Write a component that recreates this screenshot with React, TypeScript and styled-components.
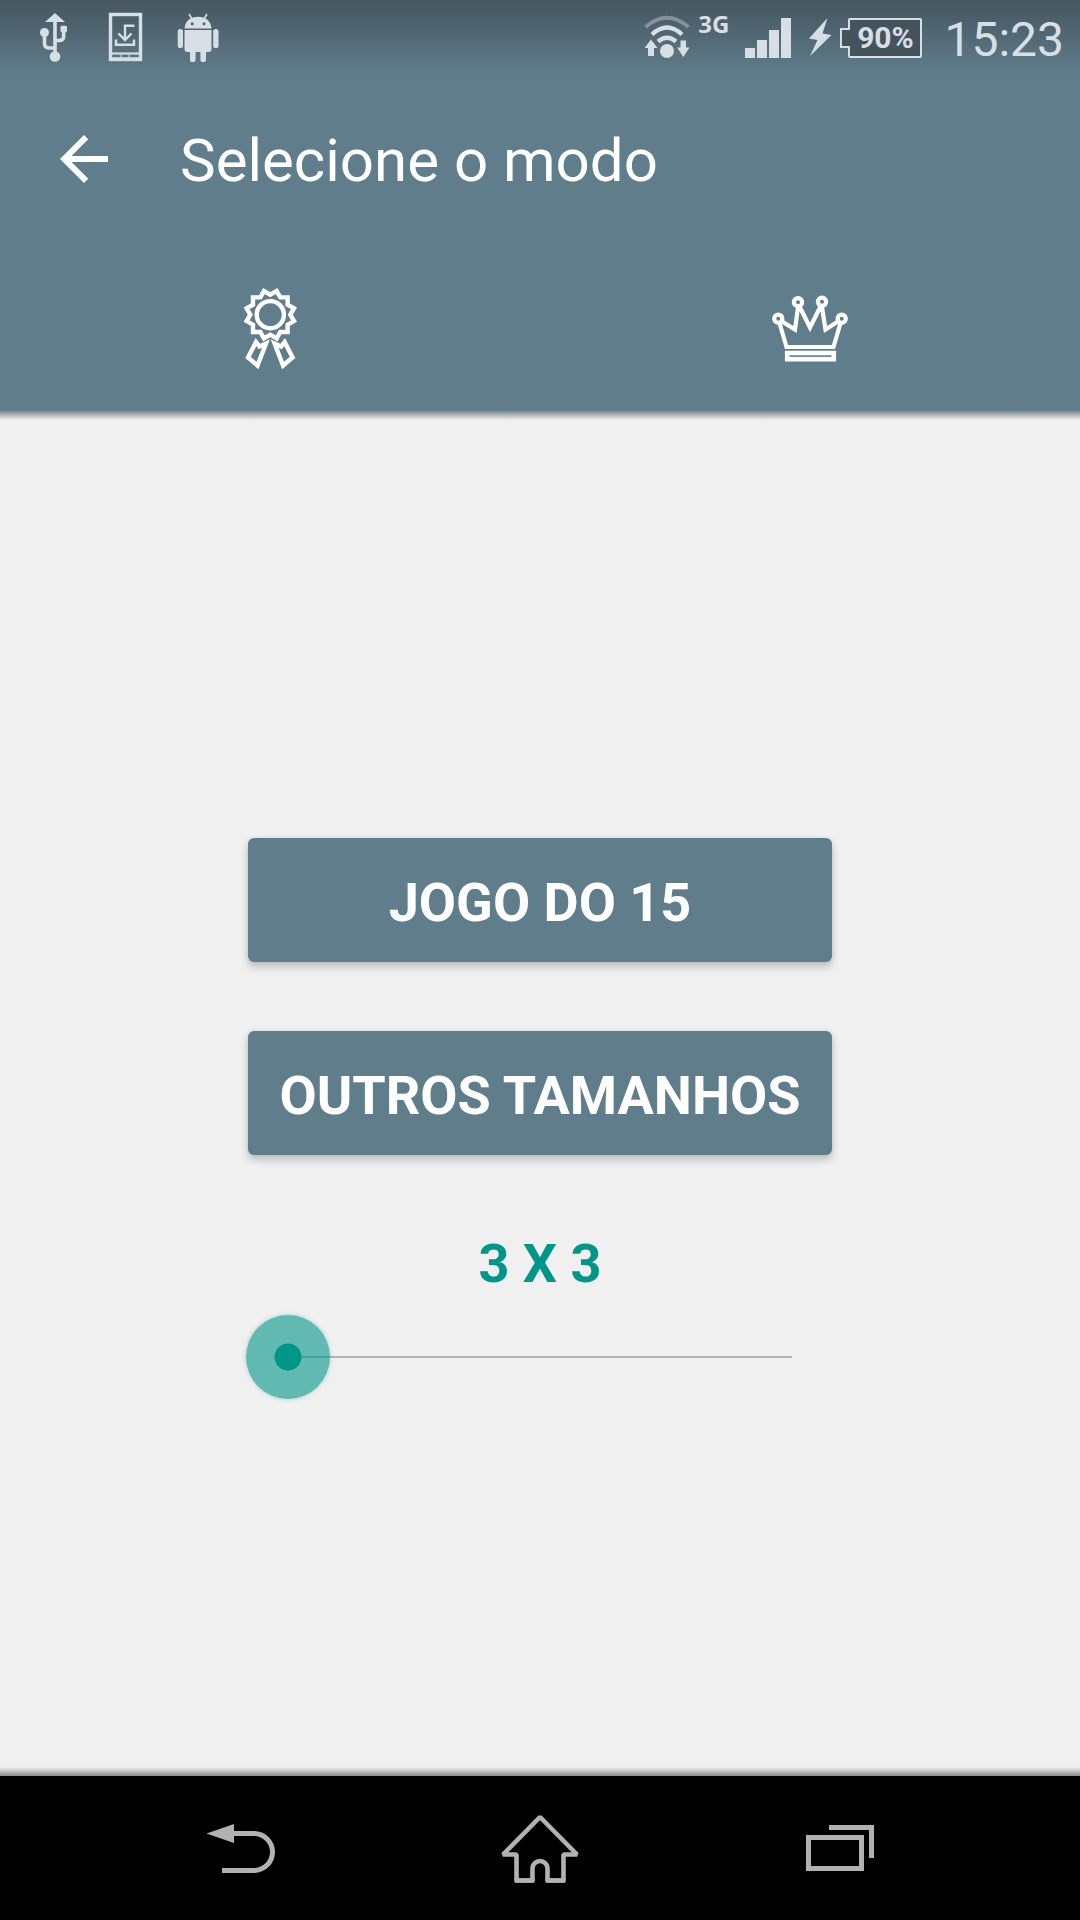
import React, { useState } from "react";
import styled, { createGlobalStyle } from "styled-components";

const slate = "#607d8b";
const teal = "#009688";
const halo = "rgba(0, 150, 136, 0.6)";
const paper = "#f0f0f0";
const statusInk = "#d7dfe4";

const GlobalStyle = createGlobalStyle`
  *, *::before, *::after { box-sizing: border-box; }
  body {
    margin: 0;
    background: ${paper};
    font-family: Roboto, "Noto Sans", sans-serif;
  }
`;

const Screen = styled.div`
  display: flex;
  flex-direction: column;
  min-height: 100vh;
`;

const Header = styled.header`
  background: ${slate};
`;

const StatusBar = styled.div`
  display: flex;
  align-items: center;
  justify-content: space-between;
  height: 75px;
  padding: 0 16px 0 18px;
  color: ${statusInk};
  background: linear-gradient(#445660, ${slate});
`;

const Notifications = styled.div`
  display: flex;
`;

const StatusSide = styled.div`
  display: flex;
  align-items: center;
`;

const Icon = styled.svg`
  display: block;
  flex: none;
`;

const Network = styled.span`
  align-self: flex-start;
  margin: 12px 16px 0 6px;
  font: 700 24px/24px "Noto Sans", sans-serif;
`;

const Battery = styled.div`
  display: flex;
  align-items: center;
  margin: 0 22px 0 8px;
`;

const BatteryTip = styled.span`
  z-index: 1;
  width: 10px;
  height: 20px;
  margin-right: -2px;
  border: 2px solid ${statusInk};
  border-right: 0;
  background: #43545d;
`;

const BatteryBody = styled.span`
  width: 74px;
  height: 40px;
  border: 2px solid ${statusInk};
  border-radius: 2px;
  background: #43545d;
  font-size: 30px;
  font-weight: 700;
  line-height: 36px;
  text-align: center;
`;

const Clock = styled.time`
  font-size: 48px;
  line-height: 56px;
  padding-top: 4px;
`;

const Toolbar = styled.div`
  display: flex;
  align-items: center;
  gap: 60px;
  height: 168px;
  padding: 0 48px;
`;

const IconButton = styled.button`
  display: grid;
  place-items: center;
  padding: 0;
  border: 0;
  background: none;
  color: inherit;
  cursor: pointer;
`;

const Title = styled.h1`
  margin: 0;
  padding-top: 4px;
  color: #fff;
  font-size: 60px;
  font-weight: 400;
  line-height: 72px;
`;

const Tabs = styled.nav`
  display: grid;
  grid-template-columns: 1fr 1fr;
  height: 168px;
`;

const Main = styled.main`
  flex: 1;
  display: flex;
  flex-direction: column;
  justify-content: space-between;
  align-items: stretch;
  background: ${paper};
`;

const Edge = styled.div<{ $from: string; $to: string }>`
  height: 9px;
  background: linear-gradient(${(p) => p.$from}, ${(p) => p.$to});
`;

const Modes = styled.section`
  display: flex;
  flex-direction: column;
  width: 588px;
  max-width: 100%;
  margin: 0 auto;
  padding-top: 50px;
`;

const ModeButton = styled.button`
  height: 124px;
  margin: 0 2px 69px;
  padding: 6px 0 0;
  border: 0;
  border-radius: 6px;
  background: ${slate};
  box-shadow: 0 5px 8px rgba(0, 0, 0, 0.2), 0 0 5px rgba(0, 0, 0, 0.08);
  color: #fff;
  font-family: inherit;
  font-size: 54px;
  font-weight: 700;
  line-height: 64px;
  white-space: nowrap;
  cursor: pointer;
`;

const SizeLabel = styled.label`
  margin: 8px 0 19px;
  color: ${teal};
  font-size: 54px;
  font-weight: 700;
  line-height: 64px;
  text-align: center;
`;

const thumb = `
  appearance: none;
  width: 84px;
  height: 84px;
  border: 0;
  border-radius: 50%;
  background: radial-gradient(circle, ${teal} 13px, ${halo} 14px);
  box-shadow: 0 0 4px rgba(0, 150, 136, 0.35);
`;

const SizeSlider = styled.input`
  appearance: none;
  display: block;
  width: 100%;
  height: 84px;
  margin: 0;
  background: linear-gradient(#b3b3b3, #b3b3b3) center / calc(100% - 84px) 2px no-repeat;
  outline: none;

  &::-webkit-slider-thumb { ${thumb} }
  &::-moz-range-thumb { ${thumb} }
`;

const NavBar = styled.nav`
  display: grid;
  grid-template-columns: repeat(3, 1fr);
  height: 144px;
  padding: 0 8.333%;
  background: #000;
  color: #b2b2b2;
`;

const TEETH = 12;
const rosette = Array.from({ length: TEETH * 2 }, (_, i) => {
  const angle = (Math.PI / TEETH) * i;
  const radius = i % 2 ? 24.5 : 20;
  return `${(50.3 + radius * Math.sin(angle)).toFixed(2)},${(44.7 - radius * Math.cos(angle)).toFixed(2)}`;
}).join(" ");

const UsbIcon = () => (
  <Icon width="72" height="75" viewBox="18 0 72 75" fill="currentColor">
    <path d="M55 13l10 9H45z" />
    <circle cx="55" cy="56.5" r="5.3" />
    <circle cx="44.5" cy="32.5" r="4.5" />
    <rect x="60.5" y="25.700" width="6.5" height="6.5" rx="1.5" />
    <path
      d="M55 20V56M44.5 34V43Q44.5 48 49 48H55M63.7 30V36Q63.7 40.5 59 40.5H55"
      fill="none"
      stroke="currentColor"
      strokeWidth="3.6"
    />
  </Icon>
);

const DownloadIcon = () => (
  <Icon width="72" height="75" viewBox="90 0 72 75" fill="none" stroke="currentColor">
    <rect x="110.5" y="14.5" width="30" height="45" strokeWidth="3.4" />
    <path d="M111 53.5H141" strokeWidth="2.2" />
    <path d="M111 59H141" strokeWidth="3.5" />
    <path d="M121 54.5V59M129 54.5V59" strokeWidth="1" />
    <path d="M116 39.5V44.7H134V39.5" strokeWidth="2.4" />
    <path d="M134.5 25.8H125V40M118.5 33.5L125 40L131.5 33.5" strokeWidth="2.4" />
  </Icon>
);

const AndroidIcon = () => (
  <Icon width="72" height="75" viewBox="162 0 72 75" fill="currentColor">
    <path d="M184.5 28.5C185 21 190.5 16.7 198 16.7S211 21 211.5 28.5Z" />
    <path d="M189 14L192 19M207 14L204 19" stroke="currentColor" strokeWidth="1.6" />
    <circle cx="192.2" cy="23.7" r="1.5" fill="#4d626d" />
    <circle cx="204" cy="23.7" r="1.5" fill="#4d626d" />
    <path d="M184.5 30H211.5V49Q211.5 52 208.5 52H187.5Q184.5 52 184.5 49Z" />
    <rect x="177.7" y="29" width="5.3" height="19" rx="2.6" />
    <rect x="213.2" y="29" width="5.3" height="19" rx="2.6" />
    <rect x="190" y="45" width="5.6" height="17" rx="2.6" />
    <rect x="200.4" y="45" width="5.6" height="17" rx="2.6" />
  </Icon>
);

const WifiIcon = () => (
  <Icon width="50" height="75" viewBox="641 0 50 75" fill="none" stroke="currentColor">
    <path d="M644.5 27Q666 8.500 687.500 27" strokeWidth="4" opacity="0.4" />
    <path d="M651 34.500Q666 20.500 681 34.500" strokeWidth="4.400" />
    <path d="M657 41.500Q666 34 675 41.500" strokeWidth="4.400" />
    <circle cx="666" cy="51" r="7" fill="currentColor" stroke="none" />
    <path
      d="M650 39.5L656.500 48H653V56H647V48H643.500ZM679.500 40.500H685V47.500H688.500L682.300 57L676.200 47.500H679.500Z"
      fill="currentColor"
      stroke="none"
    />
  </Icon>
);

const SignalIcon = () => (
  <Icon width="46" height="75" viewBox="746 0 46 75" fill="currentColor">
    <path d="M746 48h10v10h-10zM758 40h10v18h-10zM770 30h10v28h-10zM782 18h10v40h-10z" />
  </Icon>
);

const BoltIcon = () => (
  <Icon width="41" height="75" viewBox="792 0 41 75" fill="currentColor">
    <path d="M828.5 18L810 38.5L818.5 40L811 56L832.5 35L823.5 33.5Z" />
  </Icon>
);

const BackArrowIcon = () => (
  <Icon width="72" height="72" viewBox="0 0 24 24" fill="#fff">
    <path d="M20 11H7.83l5.59-5.59L12 4l-8 8 8 8 1.41-1.41L7.83 13H20v-2z" />
  </Icon>
);

const RibbonIcon = () => (
  <Icon width="100" height="114" viewBox="0 0 100 114" fill="none" stroke="#fff" strokeWidth="4.4">
    <polygon points={rosette} />
    <circle cx="50.3" cy="44.7" r="13.6" />
    <path d="M36 72L28 87.5L37.5 95.5L46 73.5L39.5 76.5ZM64.6 72L72.6 87.5L63.1 95.5L54.6 73.5L61.1 76.5Z" />
  </Icon>
);

const CrownIcon = () => (
  <Icon width="120" height="114" viewBox="0 0 120 114" fill="none" stroke="#fff" strokeWidth="4.2">
    <circle cx="28.3" cy="48.7" r="4.1" />
    <circle cx="48" cy="32.2" r="4.1" />
    <circle cx="72" cy="31.8" r="4.1" />
    <circle cx="91.7" cy="48.7" r="4.1" />
    <path d="M29.5 53L36.5 77H83.5L90.5 53M32 51.5L45 59.5L48 37M49.5 36.5L60 57.5L70.500 36.5M72 37L75.500 59.5L88 51.500" />
    <rect x="37.2" y="83" width="46.6" height="6.2" strokeWidth="4.6" />
  </Icon>
);

const NavBackIcon = () => (
  <Icon width="72" height="72" viewBox="204 1812 72 72">
    <path d="M206.5 1833.5L234 1824V1843Z" fill="currentColor" />
    <path d="M233 1833.5H254A18.5 18.5 0 0 1 254 1870.5H222" fill="none" stroke="currentColor" strokeWidth="5" />
  </Icon>
);

const NavHomeIcon = () => (
  <Icon width="84" height="72" viewBox="498 1812 84 72" fill="none" stroke="currentColor" strokeWidth="4.6" strokeLinejoin="bevel">
    <path d="M540 1817L503 1854.5H516.500V1880.500H532.500V1868.500A7.500 7.500 0 0 1 547.500 1868.500V1880.500H563.500V1854.500H577Z" />
    <path d="M514.500 1880.500H534.500M545.500 1880.500H565.500" />
  </Icon>
);

const NavRecentIcon = () => (
  <Icon width="72" height="72" viewBox="804 1812 72 72" fill="none" stroke="currentColor" strokeWidth="5">
    <rect x="808.5" y="1837.5" width="53" height="31" />
    <path d="M829 1827.5H871.5V1858" />
  </Icon>
);

export default function App() {
  const [size, setSize] = useState(3);

  return (
    <Screen>
      <GlobalStyle />
      <Header>
        <StatusBar>
          <Notifications>
            <UsbIcon />
            <DownloadIcon />
            <AndroidIcon />
          </Notifications>
          <StatusSide>
            <WifiIcon />
            <Network>3G</Network>
            <SignalIcon />
            <BoltIcon />
            <Battery>
              <BatteryTip />
              <BatteryBody>90%</BatteryBody>
            </Battery>
            <Clock>15:23</Clock>
          </StatusSide>
        </StatusBar>
        <Toolbar>
          <IconButton type="button" aria-label="Voltar">
            <BackArrowIcon />
          </IconButton>
          <Title>Selecione o modo</Title>
        </Toolbar>
        <Tabs>
          <IconButton type="button" aria-label="Conquistas">
            <RibbonIcon />
          </IconButton>
          <IconButton type="button" aria-label="Placar">
            <CrownIcon />
          </IconButton>
        </Tabs>
      </Header>
      <Main>
        <Edge $from="#7d878b" $to={paper} />
        <Modes>
          <ModeButton type="button">JOGO DO 15</ModeButton>
          <ModeButton type="button">OUTROS TAMANHOS</ModeButton>
          <SizeLabel htmlFor="board-size">
            {size} X {size}
          </SizeLabel>
          <SizeSlider
            id="board-size"
            type="range"
            min={3}
            max={10}
            value={size}
            onChange={(e) => setSize(Number(e.target.value))}
          />
        </Modes>
        <Edge $from={paper} $to="#8c8c8c" />
      </Main>
      <NavBar>
        <IconButton type="button" aria-label="Voltar">
          <NavBackIcon />
        </IconButton>
        <IconButton type="button" aria-label="Início">
          <NavHomeIcon />
        </IconButton>
        <IconButton type="button" aria-label="Recentes">
          <NavRecentIcon />
        </IconButton>
      </NavBar>
    </Screen>
  );
}
